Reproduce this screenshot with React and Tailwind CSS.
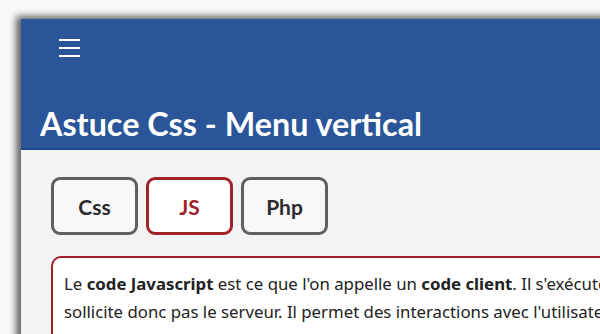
export default function App() {
  return (
    <div className="w-[600px] h-[334px] overflow-hidden bg-[#fafafa] pl-[21px] pt-[19px]">
      <div className="w-[620px] h-[400px] bg-[#f2f3f2] shadow-[-5px_-3px_7px_rgba(0,0,0,0.6)]">
        <div className="h-[131px] bg-[#2a5598] border-b-2 border-[#23498a] flex flex-col">
          <div className="pl-[38px] pt-[20px] flex flex-col gap-[6px] w-fit">
            <div className="w-[21px] h-[2px] bg-white"></div>
            <div className="w-[21px] h-[2px] bg-white"></div>
            <div className="w-[21px] h-[2px] bg-white"></div>
          </div>
          <h1 className="mt-auto pl-[19px] pb-[4px] text-white font-bold text-[32.3px] leading-[40px] font-['Lato',sans-serif]">
            Astuce Css - Menu vertical
          </h1>
        </div>
        <div className="pl-[30px] pt-[27px]">
          <div className="flex gap-[8px]">
            <div className="w-[87px] h-[58px] rounded-[9px] border-[3px] border-[#5f5f5f] bg-[#f8f8f8] flex items-center justify-center pt-[2px] text-[21px] font-bold text-[#2b2b2b] font-['Lato',sans-serif]">Css</div>
            <div className="w-[87px] h-[58px] rounded-[9px] border-[3px] border-[#a0222a] bg-white flex items-center justify-center pt-[2px] text-[21px] font-bold text-[#a0222a] font-['Lato',sans-serif]">JS</div>
            <div className="w-[87px] h-[58px] rounded-[9px] border-[3px] border-[#5f5f5f] bg-[#f8f8f8] flex items-center justify-center pt-[2px] text-[21px] font-bold text-[#2b2b2b] font-['Lato',sans-serif]">Php</div>
          </div>
          <div className="mt-[21px] bg-white border-2 border-[#9e1f25] rounded-tl-[10px] pl-[11px] pt-[12px] pr-[20px] h-[120px] text-[16.8px] leading-[28px] text-[#222] font-['Noto_Sans',sans-serif] whitespace-nowrap">
            <p>Le <b>code Javascript</b> est ce que l'on appelle un <b>code client</b>. Il s'exécute sur le poste du visiteur et ne</p>
            <p>sollicite donc pas le serveur. Il permet des interactions avec l'utilisateur sans rechargement.</p>
          </div>
        </div>
      </div>
    </div>
  );
}
